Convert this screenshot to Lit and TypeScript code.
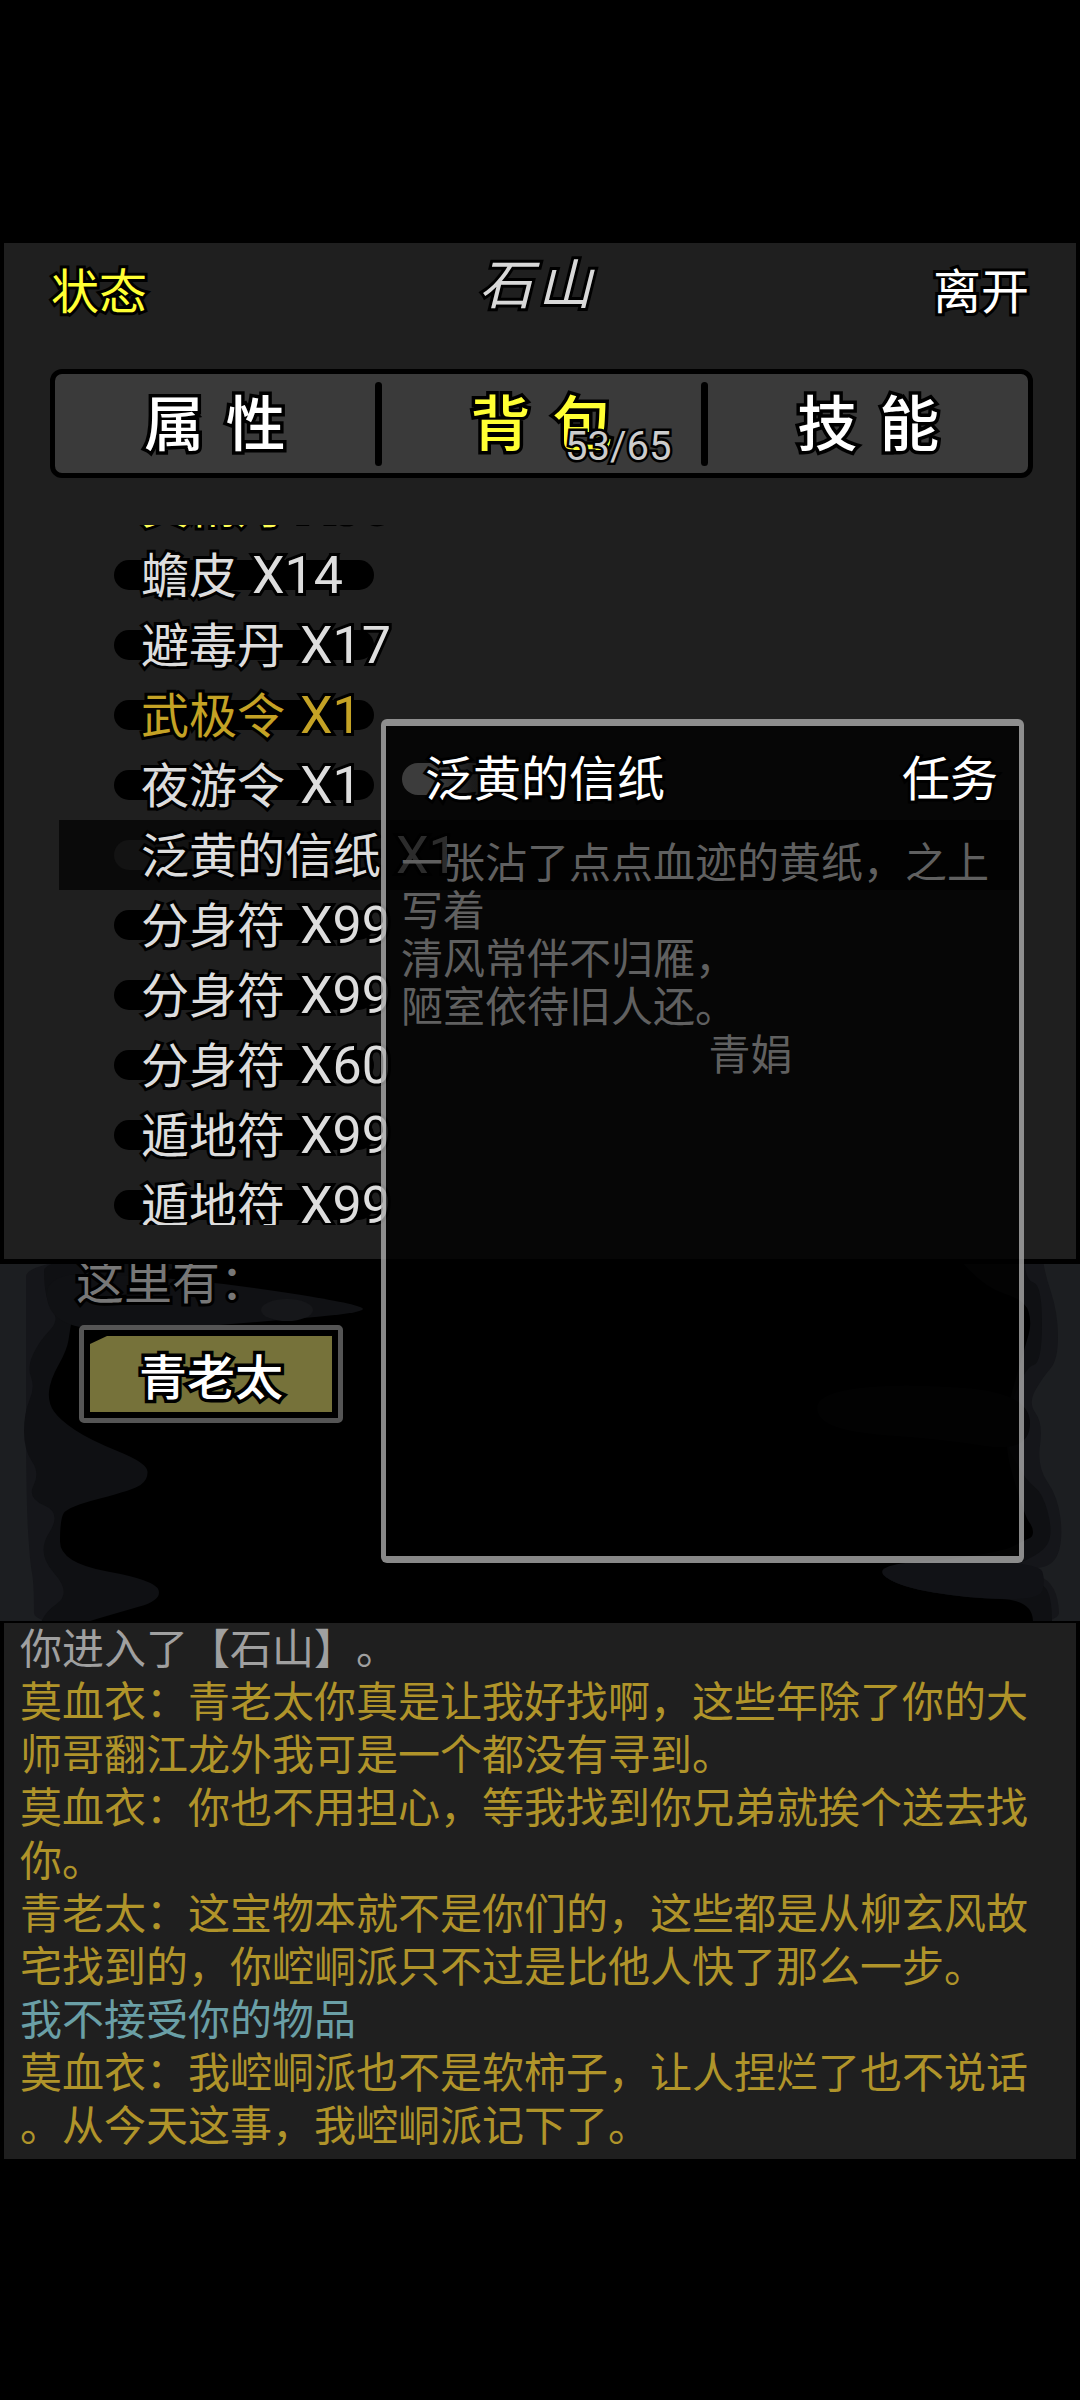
import { LitElement, html, css, svg } from "lit";
import { customElement } from "lit/decorators.js";

type Pt = [number, number];
const smooth = (p: Pt[]): string => {
  const mid = (a: Pt, b: Pt): Pt => [(a[0] + b[0]) / 2, (a[1] + b[1]) / 2];
  const start = mid(p[p.length - 1], p[0]);
  let d = `M${start[0]} ${start[1]}`;
  p.forEach((pt, i) => {
    const m = mid(pt, p[(i + 1) % p.length]);
    d += `Q${pt[0]} ${pt[1]} ${m[0]} ${m[1]}`;
  });
  return d + "Z";
};

const outer: Pt[] = [[26,-20],[26,47],[26,235],[30,300],[34,320],[34,380],[1060,380],[1058,320],[1020,306],[1053,304],[1063,277],[1058,234],[1037,204],[1043,160],[1028,140],[1043,114],[1058,97],[1058,50],[1043,5],[1043,-20]];
const mid: Pt[] = [[44,-20],[44,35],[60,57],[40,77],[27,104],[35,124],[24,150],[24,187],[40,210],[27,235],[62,250],[36,290],[72,330],[41,352],[38,380],[1052,380],[1052,337],[1043,319],[1000,308],[1043,290],[1053,270],[1043,230],[1025,217],[1000,170],[1025,104],[1042,100],[1042,22],[1025,17],[1025,-20]];
const black: Pt[] = [[240,-30],[72,56],[70,67],[67,87],[50,117],[48,140],[60,157],[90,177],[147,200],[148,217],[133,227],[67,244],[60,257],[60,300],[155,317],[162,337],[117,350],[76,362],[76,380],[1033,380],[1033,337],[967,335],[900,324],[873,305],[1000,290],[1025,277],[1033,274],[1033,264],[1025,254],[1000,170],[1025,84],[1032,60],[1025,37],[983,24],[937,-30]];
const tongue: Pt[] = [[44,10],[130,12],[240,22],[363,42],[363,50],[245,60],[120,70],[50,60]];
const rightBand: Pt[] = [[1030,130],[900,120],[820,130],[815,155],[850,170],[940,176],[1030,190]];
const lowerBand: Pt[] = [[1040,300],[930,296],[873,305],[900,324],[967,335],[1040,337],[1045,318]];

const items: { name: string; qty: string; cls?: string }[] = [
  { name: "黄精丹", qty: "X35", cls: "yellow" },
  { name: "蟾皮", qty: "X14" },
  { name: "避毒丹", qty: "X17" },
  { name: "武极令", qty: "X1", cls: "gold" },
  { name: "夜游令", qty: "X1" },
  { name: "泛黄的信纸", qty: "X1", cls: "selected" },
  { name: "分身符", qty: "X99" },
  { name: "分身符", qty: "X99" },
  { name: "分身符", qty: "X60" },
  { name: "遁地符", qty: "X99" },
  { name: "遁地符", qty: "X99" },
];

const log: { text: string; cls: string }[] = [
  { text: "你进入了【石山】。", cls: "sys" },
  { text: "莫血衣：青老太你真是让我好找啊，这些年除了你的大师哥翻江龙外我可是一个都没有寻到。", cls: "say" },
  { text: "莫血衣：你也不用担心，等我找到你兄弟就挨个送去找你。", cls: "say" },
  { text: "青老太：这宝物本就不是你们的，这些都是从柳玄风故宅找到的，你崆峒派只不过是比他人快了那么一步。", cls: "say" },
  { text: "我不接受你的物品", cls: "note" },
  { text: "莫血衣：我崆峒派也不是软柿子，让人捏烂了也不说话。从今天这事，我崆峒派记下了。", cls: "say" },
];

@customElement("app-root")
export class AppRoot extends LitElement {
  static styles = css`
    :host {
      display: block;
      position: relative;
      width: 1080px;
      height: 2400px;
      background: #000;
      overflow: hidden;
      font-family: Roboto, "Noto Sans CJK SC", sans-serif;
      font-weight: 400;
      text-spacing-trim: space-all;
    }
    .outlined {
      paint-order: stroke fill;
      -webkit-text-stroke: 6px #000;
    }
    .panel {
      box-sizing: border-box;
      margin-top: 239px;
      height: 1025px;
      border: solid #000;
      border-width: 4px 4px 5px;
      background: #1f1f1f;
      display: flex;
      flex-direction: column;
    }
    .head {
      display: flex;
      justify-content: space-between;
      padding: 26px 47px 0 47px;
      font-size: 48px;
      line-height: 48px;
      color: #fff;
    }
    .status { color: #ffff33; }
    .place {
      font-size: 54px;
      font-style: italic;
      color: #d8d8d8;
      letter-spacing: 5px;
      transform: translate(-2px, -7px);
    }
    .tabs {
      position: relative;
      box-sizing: border-box;
      margin: 52px 43px 0 46px;
      height: 109px;
      border: 5px solid #000;
      border-radius: 12px;
      background: #3a3a3a;
      display: flex;
      align-items: center;
    }
    .tab {
      flex: 1;
      text-align: center;
      font-size: 60px;
      line-height: 72px;
      font-weight: 500;
      word-spacing: 7px;
      padding-top: 5px;
      color: #fff;
      -webkit-text-stroke: 7px #000;
      paint-order: stroke fill;
    }
    .tab.on { color: #ffff33; }
    .sep {
      width: 7px;
      height: 84px;
      border-radius: 4px;
      background: #000;
    }
    .count {
      position: absolute;
      left: 510px;
      top: 53px;
      font-size: 40px;
      line-height: 40px;
      color: #ccc;
      -webkit-text-stroke: 5px #000;
      paint-order: stroke fill;
    }
    .list {
      margin-top: 47px;
      height: 700px;
      overflow: hidden;
      font-size: 48px;
    }
    .rows {
      margin: -55px 0 0 55px;
      width: 965px;
    }
    .row {
      position: relative;
      height: 70px;
      line-height: 72px;
      padding-left: 82px;
      color: #ddd;
      white-space: nowrap;
    }
    .row::before {
      content: "";
      position: absolute;
      left: 55px;
      top: 20px;
      width: 260px;
      height: 30px;
      border-radius: 15px;
      background: #000;
    }
    .row > span { position: relative; }
    .qty { font-size: 52px; margin-left: 3px; }
    .row.selected { background: #0a0a0a; }
    .row.selected::before { background: #131313; }
    .row.yellow { color: #ffff55; }
    .row.gold { color: #c4a225; }
    .scene {
      display: grid;
      height: 357px;
      overflow: hidden;
      background: #1c1e21;
    }
    .scene > * { grid-area: 1 / 1; }
    .ink { display: block; width: 1080px; height: 357px; }
    .here {
      padding-left: 76px;
      font-size: 48px;
      line-height: 38px;
      color: #777;
    }
    .npc {
      box-sizing: border-box;
      margin: 23px 0 0 79px;
      width: 264px;
      height: 98px;
      padding: 6px;
      border: 5px solid #555;
      border-radius: 5px;
      background: #000;
    }
    .npc-face {
      height: 100%;
      background: #76723a;
      clip-path: polygon(17px 0, 100% 0, 100% 100%, 0 100%, 0 8px);
      display: flex;
      align-items: center;
      justify-content: center;
      font-size: 48px;
      font-weight: 500;
      color: #fff;
      -webkit-text-stroke: 7px #000;
      paint-order: stroke fill;
    }
    .log {
      box-sizing: border-box;
      height: 538px;
      border: solid #000;
      border-width: 2px 4px 0;
      background: #1f1f1f;
      padding: 0 30px 0 16px;
      font-size: 42px;
      line-height: 53px;
      line-break: anywhere;
    }
    .log .sys { color: #a0a0a0; }
    .log .say { color: #b0942a; }
    .log .note { color: #6a9fa6; }
    .popup {
      position: absolute;
      box-sizing: border-box;
      left: 381px;
      top: 719px;
      width: 643px;
      height: 844px;
      border: solid rgba(170, 170, 170, 0.8);
      border-width: 7px 5px;
      border-radius: 6px;
      background: rgba(0, 0, 0, 0.8);
      background-clip: padding-box;
    }
    .pop-head {
      position: relative;
      display: flex;
      justify-content: space-between;
      padding: 30px 21px 0 39px;
      font-size: 48px;
      line-height: 48px;
      color: #fff;
    }
    .pop-head::before {
      content: "";
      position: absolute;
      left: 16px;
      top: 37px;
      width: 140px;
      height: 32px;
      border-radius: 16px 0 0 16px;
      background: linear-gradient(90deg, #3c3c3c 25%, #1c1c1c 50%, #0a0a0a);
    }
    .pop-head span { position: relative; }
    .desc {
      margin-top: 36px;
      padding: 0 15px;
      font-size: 42px;
      line-height: 48px;
      color: #606060;
    }
    .sign { padding-left: 96px; text-align: center; }
  `;

  render() {
    return html`
      <div class="panel">
        <div class="head">
          <span class="status outlined">状态</span>
          <span class="place outlined">石山</span>
          <span class="outlined">离开</span>
        </div>
        <div class="tabs">
          <div class="tab">属 性</div>
          <div class="sep"></div>
          <div class="tab on">背 包</div>
          <div class="sep"></div>
          <div class="tab">技 能</div>
          <div class="count">53/65</div>
        </div>
        <div class="list">
          <div class="rows">
            ${items.map(
              (i) => html`<div class="row ${i.cls ?? ""}"><span class="outlined">${i.name} <span class="qty">${i.qty}</span></span></div>`
            )}
          </div>
        </div>
      </div>
      <div class="scene">
        <svg class="ink" viewBox="0 1 1080 357" aria-hidden="true">
          ${svg`
            <path d=${smooth(outer)} fill="#15161a"></path>
            <path d=${smooth(mid)} fill="#0f1013"></path>
            <path d=${smooth(black)} fill="#000"></path>
            <path d=${smooth(tongue)} fill="#101114"></path>
            <ellipse cx="287" cy="47" rx="26" ry="11" fill="#16171a"></ellipse>
            <path d=${smooth(rightBand)} fill="#0b0b0d"></path>
            <path d=${smooth(lowerBand)} fill="#111216"></path>
          `}
        </svg>
        <div>
          <div class="here outlined">这里有：</div>
          <div class="npc"><div class="npc-face">青老太</div></div>
        </div>
      </div>
      <div class="log">
        ${log.map((l) => html`<div class=${l.cls}>${l.text}</div>`)}
      </div>
      <div class="popup">
        <div class="pop-head">
          <span class="outlined">泛黄的信纸</span>
          <span class="outlined">任务</span>
        </div>
        <div class="desc">
          <div>一张沾了点点血迹的黄纸，之上写着</div>
          <div>清风常伴不归雁，</div>
          <div>陋室依待旧人还。</div>
          <div class="sign">青娟</div>
        </div>
      </div>
    `;
  }
}
